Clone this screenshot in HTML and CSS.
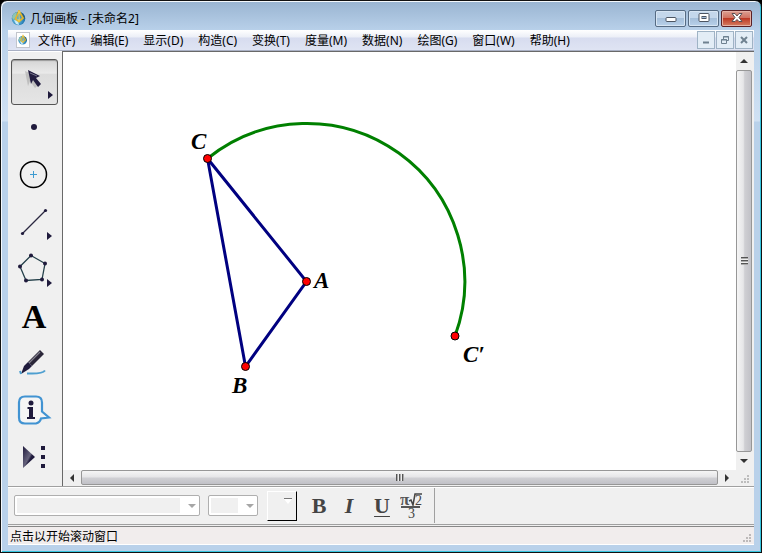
FILE: index.html
```html
<!DOCTYPE html>
<html lang="zh-CN">
<head>
    <meta charset="UTF-8">
    <meta name="viewport" content="width=device-width, initial-scale=1.0">
    <title>几何画板 - [未命名2]</title>
    <link rel="stylesheet" href="styles.css">
</head>
<body>
    <svg class="defs" width="0" height="0" aria-hidden="true">
        <defs>
            <radialGradient id="globe" cx="0.4" cy="0.6" r="0.6">
                <stop offset="0" stop-color="#7fd0ee"/>
                <stop offset="1" stop-color="#146ca8"/>
            </radialGradient>
            <linearGradient id="play" x1="0" y1="0" x2="1" y2="1">
                <stop offset="0" stop-color="#1f1a3c"/>
                <stop offset="0.5" stop-color="#66637c"/>
                <stop offset="0.6" stop-color="#1f1a3c"/>
            </linearGradient>
            <symbol id="logo" viewBox="0 0 16 16">
                <circle cx="7.500" cy="8.500" r="6.800" fill="url(#globe)"/>
                <path d="M1 7a7 7 0 0 1 5-5l-1 5-3 3z" fill="#8fc4b0"/>
                <path d="M10 2.500a7 7 0 0 1 4 6l-2 1z" fill="#2b5f7c"/>
                <path d="M3 10l2 4 3 1-1-4z" fill="#c8ecfa"/>
                <path d="M8 1L4.500 9 8 11.500 12 8z" fill="none" stroke="#e3b62c" stroke-width="1.800"/>
                <path d="M8 4L6.500 8.500 8 9.500z" fill="#3f88ad"/>
                <path d="M8 1v10.500" stroke="#f7dc6a"/>
            </symbol>
        </defs>
    </svg>
    <div class="window">
        <header class="title-bar">
            <svg class="logo"><use href="#logo"/></svg>
            <h1 class="title">几何画板 - [未命名2]</h1>
            <div class="window-buttons">
                <button class="window-button" aria-label="最小化">
                    <svg width="12" height="12"><rect x="1" y="5.500" width="10" height="4" rx="1" fill="#fff" stroke="#4c5562"/></svg>
                </button>
                <button class="window-button" aria-label="最大化">
                    <svg width="12" height="12"><rect x="1" y="1.500" width="10" height="8" rx="1" fill="#fff" stroke="#4c5562"/><rect x="4" y="4.500" width="4" height="2" fill="#9db9d7" stroke="#4c5562"/></svg>
                </button>
                <button class="window-button close" aria-label="关闭">
                    <svg width="12" height="12"><path d="M1 1.500h3l2 2.500 2-2.500h3L8 5.500l3 4H8L6 7.500l-2 2H1l3-4z" fill="#fff" stroke="#5b5154"/></svg>
                </button>
            </div>
        </header>
        <div class="client">
            <nav class="menu-bar">
                <span class="doc-icon"><svg width="10" height="12"><use href="#logo"/></svg></span>
                <div class="menus">
                    <button class="menu">文件(F)</button>
                    <button class="menu">编辑(E)</button>
                    <button class="menu">显示(D)</button>
                    <button class="menu">构造(C)</button>
                    <button class="menu">变换(T)</button>
                    <button class="menu">度量(M)</button>
                    <button class="menu">数据(N)</button>
                    <button class="menu">绘图(G)</button>
                    <button class="menu">窗口(W)</button>
                    <button class="menu">帮助(H)</button>
                </div>
                <div class="doc-buttons">
                    <button class="doc-button" aria-label="最小化文档">
                        <svg width="10" height="10"><path d="M2 7.500h6" stroke="#6f8190" stroke-width="2"/></svg>
                    </button>
                    <button class="doc-button" aria-label="还原文档">
                        <svg width="10" height="10" fill="none" stroke="#6f8190"><path d="M3.500 4V1.500h5v4H7M3 2h6"/><path d="M1.500 4.500h5v4h-5zM1 5h6"/></svg>
                    </button>
                    <button class="doc-button" aria-label="关闭文档">
                        <svg width="10" height="10"><path d="M2 2l6 6M8 2L2 8" stroke="#6f8190" stroke-width="2"/></svg>
                    </button>
                </div>
            </nav>
            <main class="workspace">
                <div class="toolbox">
                    <button class="tool active" aria-label="移动箭头工具">
                        <svg width="46" height="46">
                            <path d="M13 12l12 5-4 2 5 7-3 3-5-7-2 5z" fill="#aaa" opacity="0.6"/>
                            <path d="M16 11l12 6-4 2 5 6-3 3-5-7-2 4z" fill="#221d40"/>
                            <path d="M18 14l7 3" stroke="#77758c"/>
                            <path d="M36 32v8l5-4z" fill="#1f1a3c"/>
                        </svg>
                    </button>
                    <button class="tool" aria-label="点工具">
                        <svg width="46" height="46"><circle cx="23" cy="21" r="3" fill="#1f1a3c"/></svg>
                    </button>
                    <button class="tool" aria-label="圆工具">
                        <svg width="46" height="46"><circle cx="22.500" cy="21.500" r="13" fill="none" stroke="#000" stroke-width="1.500"/><path d="M19 21.500h7M22.500 18v7" stroke="#3e9bd0"/></svg>
                    </button>
                    <button class="tool" aria-label="线段工具">
                        <svg width="46" height="46">
                            <path d="M11.500 33.500L34.500 10.500" stroke="#2b2840" stroke-width="1.300"/>
                            <circle cx="11.500" cy="33.500" r="1.600" fill="#1f1a3c"/><circle cx="34.500" cy="10.500" r="1.600" fill="#1f1a3c"/>
                            <path d="M36 32v8l5-4z" fill="#1f1a3c"/>
                        </svg>
                    </button>
                    <button class="tool" aria-label="多边形工具">
                        <svg width="46" height="46">
                            <path d="M20 8.500L34 16.500 31 32.500 15 33.500 9 19.500z" fill="none" stroke="#24404a" stroke-width="1.300"/>
                            <g fill="#1f1a3c"><circle cx="20" cy="8.500" r="2"/><circle cx="34" cy="16.500" r="2"/><circle cx="31" cy="32.500" r="2"/><circle cx="15" cy="33.500" r="2"/><circle cx="9" cy="19.500" r="2"/></g>
                            <path d="M36 32v8l5-4z" fill="#1f1a3c"/>
                        </svg>
                    </button>
                    <button class="tool letter">A</button>
                    <button class="tool" aria-label="标记工具">
                        <svg width="46" height="46">
                            <path d="M29 9l4 4-12 12-4-4z" fill="#2a2638"/>
                            <path d="M29 11L18 22" stroke="#85838f" stroke-width="1.300"/>
                            <path d="M17 21l4 4-3 3-8 5 3-8z" fill="#1f1a3c"/>
                            <path d="M9 30l1 3M16 32.500c6 0 15 1 18-3" fill="none" stroke="#4e9fd0" stroke-width="2"/>
                        </svg>
                    </button>
                    <button class="tool" aria-label="信息工具">
                        <svg width="46" height="46">
                            <path d="M14 8.500h11q6 0 6 6v9l7 6-8 1q-1 4-5 5H14q-6 0-6-6v-15q0-6 6-6z" fill="#f5f5f5" stroke="#4193d2" stroke-width="2.200"/>
                            <circle cx="20" cy="15" r="2.500" fill="#1f1a3c"/>
                            <path d="M16.500 19H22v10h2v2h-8v-2h2v-8h-1.500z" fill="#1f1a3c"/>
                        </svg>
                    </button>
                    <button class="tool" aria-label="自定义工具">
                        <svg width="46" height="46"><path d="M12 11v22l12-11z" fill="url(#play)"/><path d="M30 11h4v4h-4zM30 20h4v4h-4zM30 29h4v4h-4z" fill="#1f1a3c"/></svg>
                    </button>
                </div>
                <div class="sketch-area">
                    <svg class="sketch" role="img" aria-label="三角形ABC与点C的轨迹">
                        <path class="arc" d="M144.500 106.500A158 158 0 0 1 392 284"/>
                        <path class="segment" d="M144.500 106.500L243.500 229.500 182.500 314.500z"/>
                        <circle class="point" cx="144.500" cy="106.500" r="4"/>
                        <circle class="point" cx="243.500" cy="229.500" r="4"/>
                        <circle class="point" cx="182.500" cy="314.500" r="4"/>
                        <circle class="point" cx="392" cy="284" r="4"/>
                        <text class="label" x="128" y="97">C</text>
                        <text class="label" x="251" y="236">A</text>
                        <text class="label" x="169" y="341">B</text>
                        <text class="label" x="400" y="310">C′</text>
                    </svg>
                    <div class="scrollbar vertical">
                        <button class="scroll-arrow" aria-label="向上滚动"><svg width="8" height="8"><path d="M0 6l4-4 4 4z" fill="#333"/></svg></button>
                        <div class="thumb"><span class="grip"></span></div>
                        <button class="scroll-arrow" aria-label="向下滚动"><svg width="8" height="8"><path d="M0 2l4 4 4-4z" fill="#333"/></svg></button>
                    </div>
                    <div class="scrollbar horizontal">
                        <button class="scroll-arrow" aria-label="向左滚动"><svg width="8" height="8"><path d="M6 0L2 4l4 4z" fill="#333"/></svg></button>
                        <div class="thumb"><span class="grip"></span></div>
                        <button class="scroll-arrow" aria-label="向右滚动"><svg width="8" height="8"><path d="M2 0l4 4-4 4z" fill="#333"/></svg></button>
                    </div>
                    <div class="corner"><svg width="10" height="10"><path d="M7 0h2v2H7zM4 3h2v2H4zM7 3h2v2H7zM1 6h2v2H1zM4 6h2v2H4zM7 6h2v2H7z" fill="#bdbdbd"/></svg></div>
                </div>
            </main>
            <div class="text-bar">
                <label class="combo font-combo">
                    <select disabled aria-label="字体"><option></option></select>
                    <svg class="combo-arrow" width="8" height="4"><path d="M0 0h8L4 4z" fill="#a6a6a6"/></svg>
                </label>
                <label class="combo size-combo">
                    <select disabled aria-label="字号"><option></option></select>
                    <svg class="combo-arrow" width="8" height="4"><path d="M0 0h8L4 4z" fill="#a6a6a6"/></svg>
                </label>
                <button class="color-button" aria-label="颜色">
                    <svg width="10" height="6"><path d="M1 1h8L5 6z" fill="#fff"/><path d="M1 .5h8" stroke="#777"/></svg>
                </button>
                <div class="format-buttons">
                    <button class="format bold">B</button>
                    <button class="format italic">I</button>
                    <button class="format underline">U</button>
                    <button class="format math" aria-label="数学符号">
                        <svg width="26" height="34">
                            <text x="0" y="16" class="math-text">π</text>
                            <path d="M9 12l2-1 2 5 2-11h7" fill="none" stroke="#444" stroke-width="1.500"/>
                            <text x="15" y="16" class="math-digit">2</text>
                            <path d="M1 18h19" stroke="#555" stroke-width="2"/>
                            <text x="8" y="29" class="math-digit">3</text>
                        </svg>
                    </button>
                </div>
            </div>
            <footer class="status-bar">
                <span>点击以开始滚动窗口</span>
                <svg class="size-grip" width="10" height="10"><path d="M7 0h2v2H7zM4 3h2v2H4zM7 3h2v2H7zM1 6h2v2H1zM4 6h2v2H4zM7 6h2v2H7z" fill="#bdb9b9"/></svg>
            </footer>
        </div>
    </div>
</body>
</html>
```

FILE: styles.css
```css
* {
    box-sizing: border-box;
}
body {
    margin: 0;
    background: #000;
    font-family: "Noto Sans", "Noto Sans CJK SC", sans-serif;
    font-size: 12px;
    color: #000;
}
button {
    margin: 0;
    padding: 0;
    border: none;
    background: none;
    color: inherit;
    font: inherit;
}
svg {
    display: block;
}
.defs {
    position: absolute;
}
.window {
    display: flex;
    flex-direction: column;
    height: 100vh;
    padding: 0 6px 6px;
    border: 1px solid #111;
    border-radius: 7px 7px 0 0;
    background: linear-gradient(#99b4d1, #b9d1ea 30px, #d0e1f3 120px, #b9d1ea 121px);
    box-shadow: inset 1px 1px #f4f8fc, inset -1px -1px #35c5df;
}
.title-bar {
    display: flex;
    align-items: center;
    gap: 3px;
    height: 29px;
    padding: 5px 2px 0 4px;
}
.logo {
    width: 16px;
    height: 16px;
}
.title {
    flex: 1;
    margin: 0;
    font-size: 12px;
    font-weight: normal;
}
.window-buttons {
    display: flex;
    gap: 2px;
    padding-right: 1px;
}
.window-button {
    display: flex;
    align-items: center;
    justify-content: center;
    width: 31px;
    height: 17px;
    border: 1px solid #566b83;
    border-radius: 2px;
    background: linear-gradient(#c4d7eb 50%, #a5bfda 50%, #b9d1ea);
    box-shadow: inset 0 0 0 1px #d7e5f3;
}
.window-button.close {
    border-color: #5b2025;
    background: linear-gradient(#dda093, #cf6d5c 50%, #bd3925 50%, #d57e63);
    box-shadow: inset 0 0 0 1px #e5b1a5;
}
.client {
    flex: 1;
    display: flex;
    flex-direction: column;
    min-height: 0;
    margin: 0 1px 1px;
    background: #f0f0f0;
}
.menu-bar {
    display: flex;
    align-items: center;
    height: 21px;
    padding: 0 1px 0 8px;
    border-bottom: 1px solid #a9b0c4;
    background: linear-gradient(#fff, #eceff7 35%, #d7dcef 40%, #dfe4f3);
}
.doc-icon {
    padding: 1px;
    border: 1px solid #c2c5cc;
    background: #fff;
}
.menus {
    flex: 1;
    display: flex;
    gap: 15px;
    margin-left: 8px;
}
.doc-buttons {
    display: flex;
    gap: 1px;
}
.doc-button {
    display: flex;
    align-items: center;
    justify-content: center;
    width: 18px;
    height: 18px;
    border: 1px solid #9fb3c5;
    background: #e3edf6;
}
.workspace {
    flex: 1;
    display: flex;
    min-height: 0;
    border-bottom: 1px solid #a0a0a0;
}
.toolbox {
    display: flex;
    flex-direction: column;
    gap: 1px;
    width: 54px;
    padding: 7px 3px 0;
    border-top: 1px solid #fff;
}
.tool {
    display: flex;
    align-items: center;
    justify-content: center;
    width: 46px;
    height: 46px;
}
.tool.active {
    width: 47px;
    border: 1px solid #555;
    border-radius: 3px;
    background: linear-gradient(#d5d5d5, #eaeaea 30%, #dcdcdc 32%, #e5e5e5);
    box-shadow: inset 0 1px 1px #999;
}
.tool.letter {
    font: bold 34px "Liberation Serif", serif;
}
.sketch-area {
    flex: 1;
    display: grid;
    grid-template-columns: 1fr 18px;
    grid-template-rows: 1fr 16px;
    min-width: 0;
    border-top: 1px solid #696969;
    border-left: 1px solid #696969;
}
.sketch {
    width: 100%;
    height: 100%;
    background: #fff;
}
.arc {
    fill: none;
    stroke: #008000;
    stroke-width: 3;
}
.segment {
    fill: none;
    stroke: #000080;
    stroke-width: 3;
}
.point {
    fill: #f00;
    stroke: #000;
}
.label {
    font: italic bold 23px "Liberation Serif", serif;
}
.scrollbar {
    display: flex;
    background: #f0f0f0;
}
.scrollbar.vertical {
    flex-direction: column;
    padding-right: 2px;
}
.scroll-arrow {
    display: flex;
    align-items: center;
    justify-content: center;
    width: 16px;
    height: 18px;
}
.horizontal .scroll-arrow {
    width: 18px;
    height: 16px;
}
.thumb {
    flex: 1;
    display: flex;
    align-items: center;
    justify-content: center;
    border: 1px solid #979797;
    border-radius: 2px;
}
.vertical .thumb {
    background: linear-gradient(to right, #f5f5f5, #e6e6e8 45%, #cfcfd3 55%, #c1c1c7);
}
.horizontal .thumb {
    height: 15px;
    background: linear-gradient(#f5f5f5, #e6e6e8 45%, #cfcfd3 55%, #c1c1c7);
}
.vertical .grip {
    width: 7px;
    height: 8px;
    background: repeating-linear-gradient(#555 0 1px, #aaa 1px 2px, #eee 2px 3px);
}
.horizontal .grip {
    width: 8px;
    height: 7px;
    background: repeating-linear-gradient(to right, #555 0 1px, #aaa 1px 2px, #eee 2px 3px);
}
.corner {
    display: flex;
    align-items: flex-end;
    justify-content: flex-end;
    padding: 0 4px 1px 0;
}
.text-bar {
    display: flex;
    align-items: center;
    height: 38px;
    padding: 0 0 1px 6px;
    border-top: 1px solid #fff;
    border-bottom: 1px solid #a0a0a0;
}
.combo {
    position: relative;
    height: 21px;
    margin-right: 8px;
}
.font-combo {
    width: 186px;
}
.size-combo {
    width: 50px;
}
.combo select {
    appearance: none;
    display: block;
    width: 100%;
    height: 100%;
    border: 1px solid #afafaf;
    border-radius: 2px;
    background: #f0f0f0;
    box-shadow: inset 0 0 0 2px #fff, inset -19px 0 #fff;
    opacity: 1;
}
.combo-arrow {
    position: absolute;
    right: 4px;
    top: 9px;
}
.color-button {
    display: flex;
    justify-content: flex-end;
    width: 30px;
    height: 30px;
    margin: 0 7px 0 1px;
    padding: 6px 3px;
    border: 1px solid;
    border-color: #fff #000 #000 #fff;
}
.format-buttons {
    display: flex;
    align-items: center;
    align-self: stretch;
    width: 131px;
    border-right: 1px solid #a0a0a0;
}
.format {
    width: 30px;
    color: #444;
    font: bold 22px "Liberation Serif", serif;
}
.format.italic {
    font-style: italic;
}
.format.underline {
    width: 36px;
    text-decoration: underline;
    text-decoration-thickness: 1px;
    text-underline-offset: 3px;
}
.format.math {
    width: 26px;
}
.math-text {
    font: bold 17px "Liberation Serif", serif;
    fill: #555;
}
.math-digit {
    font: 14px "Liberation Serif", serif;
    fill: #444;
}
.status-bar {
    display: flex;
    align-items: center;
    justify-content: space-between;
    height: 19px;
    margin-top: 1px;
    padding: 0 2px;
    border-top: 1px solid #888;
    border-bottom: 1px solid #fff;
    background: #f1eded;
}
.size-grip {
    align-self: flex-end;
}
```
